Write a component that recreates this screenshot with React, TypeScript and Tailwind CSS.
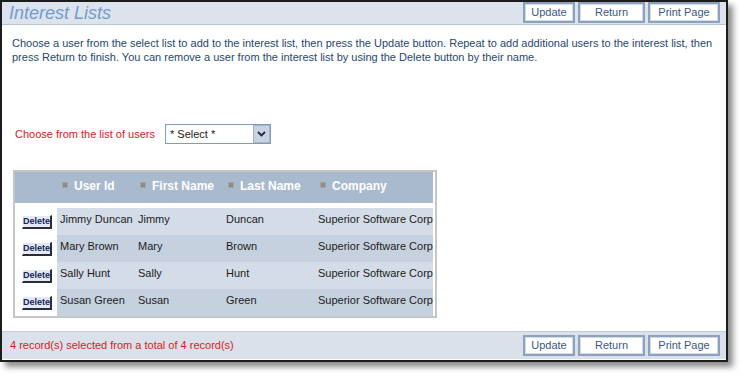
import React from 'react';

const rows = [
  { id: 'Jimmy Duncan', first: 'Jimmy', last: 'Duncan', company: 'Superior Software Corp' },
  { id: 'Mary Brown', first: 'Mary', last: 'Brown', company: 'Superior Software Corp' },
  { id: 'Sally Hunt', first: 'Sally', last: 'Hunt', company: 'Superior Software Corp' },
  { id: 'Susan Green', first: 'Susan', last: 'Green', company: 'Superior Software Corp' },
];

const PageButton: React.FC<{ label: string; width: string }> = ({ label, width }) => (
  <button
    type="button"
    className={`${width} h-[21px] flex items-center justify-center bg-white border-2 border-[#8ba1be] outline outline-1 -outline-offset-3 outline-[#d3dbe7] text-[11px] text-[#3b5883]`}
  >
    {label}
  </button>
);

const Buttons: React.FC = () => (
  <div className="flex gap-[3px]">
    <PageButton label="Update" width="w-[52px]" />
    <PageButton label="Return" width="w-[67px]" />
    <PageButton label="Print Page" width="w-[72px]" />
  </div>
);

const HeadCell: React.FC<{ label: string }> = ({ label }) => (
  <div className="flex items-center h-[20px] mt-[4px] pl-[5px] gap-[6px]">
    <span className="w-[6px] h-[6px] mb-[3px] bg-[#8c8c8c] border border-[#a3a3a3]" />
    <span className="text-[12px] font-bold text-white">{label}</span>
  </div>
);

export default function App() {
  return (
    <div className="w-[742px] h-[380px] bg-white" style={{ fontFamily: '"Liberation Sans", Arial, sans-serif' }}>
      <div className="w-[728px] h-[362px] border-2 border-[#1c1c1c] bg-white flex flex-col shadow-[5px_5px_6px_rgba(0,0,0,0.45)]">
        {/* header */}
        <div className="h-[23px] flex items-center justify-between bg-[#dde3ec] border-b border-[#b7c2d2] pl-[7px] pr-[6px]">
          <span className="text-[18px] italic text-[#729bd1] leading-none">Interest Lists</span>
          <div className="self-start">
            <Buttons />
          </div>
        </div>

        <p className="px-[10px] pt-[11px] text-[11px] leading-[14px] text-[#27476f]">
          Choose a user from the select list to add to the interest list, then press the Update button. Repeat to add additional users to the interest list, then
          <br />
          press Return to finish. You can remove a user from the interest list by using the Delete button by their name.
        </p>

        <div className="flex items-center mt-[60px] pl-[13px] gap-[10px]">
          <span className="text-[11px] text-[#d9201e]">Choose from the list of users</span>
          <div className="w-[106px] h-[20px] flex items-stretch border border-[#7f9db9] bg-white">
            <span className="flex-1 pl-[4px] text-[11px] leading-[18px] text-[#222]">* Select *</span>
            <span className="w-[17px] flex items-center justify-center bg-[#c9d2e3] border border-[#a5b4cc]">
              <svg width="9" height="6" viewBox="0 0 9 6">
                <path d="M1 1 L4.5 4.5 L8 1" stroke="#1f2a44" strokeWidth="1.8" fill="none" />
              </svg>
            </span>
          </div>
        </div>

        {/* table */}
        <div className="ml-[11px] mt-[26px] w-[424px] border-2 border-[#c6c6c6] pr-[2px]">
          <div className="grid grid-cols-[42px_78px_88px_92px_1fr] h-[31px] bg-[#a9bace]">
            <div />
            <HeadCell label="User Id" />
            <HeadCell label="First Name" />
            <HeadCell label="Last Name" />
            <HeadCell label="Company" />
          </div>
          <div className="pt-[5px]">
            {rows.map((r, i) => (
              <div key={r.id} className="grid grid-cols-[42px_78px_88px_92px_1fr] h-[27px] text-[11px] text-[#1b1b1b]">
                <div className="bg-white flex justify-center pt-[7px] pl-[2px]">
                  <button
                    type="button"
                    className="w-[30px] h-[14px] flex items-center justify-center bg-[#e3e8f1] border-t border-l border-white border-b-2 border-r-2 border-b-[#2b2b3a] border-r-[#2b2b3a] text-[9px] font-bold text-[#14245a] leading-none"
                  >
                    Delete
                  </button>
                </div>
                {[r.id, r.first, r.last, r.company].map((v, j) => (
                  <div key={j} className={`pl-[3px] pt-[4px] leading-[14px] ${i % 2 === 0 ? 'bg-[#d4dce7]' : 'bg-[#c6d1df]'}`}>
                    {v}
                  </div>
                ))}
              </div>
            ))}
          </div>
        </div>

        {/* footer */}
        <div className="mt-auto mb-[1px] h-[28px] flex items-center justify-between bg-[#dbe1ea] border-t border-[#c4cdda] pl-[8px] pr-[6px]">
          <span className="text-[11px] text-[#d9201e]">4 record(s) selected from a total of 4 record(s)</span>
          <Buttons />
        </div>
      </div>
    </div>
  );
}
